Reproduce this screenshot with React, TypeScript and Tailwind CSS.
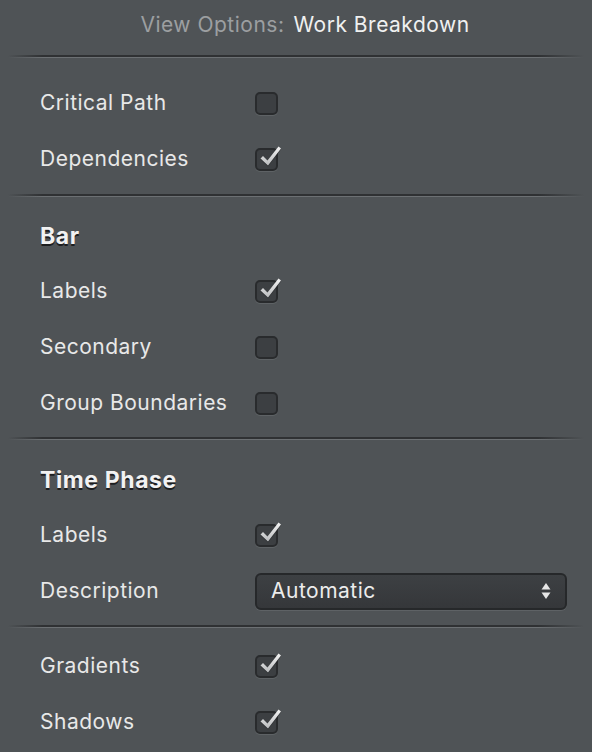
import React from "react";

const font = { fontFamily: "Inter, 'Noto Sans', sans-serif" };

function Divider() {
  return (
    <div className="flex flex-col px-[8px]">
      <div className="h-[2px] bg-[linear-gradient(to_right,transparent,#2f3133_6%,#2f3133_92%,transparent)]" />
      <div className="h-[1px] bg-[linear-gradient(to_right,transparent,#6c7073_6%,#6c7073_92%,transparent)]" />
    </div>
  );
}

function Check() {
  return (
    <svg width="30" height="30" viewBox="0 0 30 30" className="absolute left-[2px] top-[-7px]">
      <defs>
        <linearGradient id="cg" x1="0" y1="0" x2="0" y2="1">
          <stop offset="0" stopColor="#f4f4f4" />
          <stop offset="1" stopColor="#b9bbbd" />
        </linearGradient>
      </defs>
      <path d="M3.5 17.5 L6 15 L10.5 19.5 L21.5 5.5 L24 7.5 L11 24.5 Z" fill="#1e1f21" opacity="0.5" transform="translate(0,1)" />
      <path d="M3.5 17.5 L6 15 L10.5 19.5 L21.5 5.5 L24 7.5 L11 24.5 Z" fill="url(#cg)" />
    </svg>
  );
}

function Checkbox({ checked }: { checked?: boolean }) {
  return (
    <div className="relative w-[23px] h-[23px]">
      <div className="w-[23px] h-[23px] rounded-[5px] border-2 border-[#292b2d] bg-[#3c3f42] shadow-[0_1px_0_#5e6265]" />
      {checked && <Check />}
    </div>
  );
}

function Row({ label, checked, children }: { label: string; checked?: boolean; children?: React.ReactNode }) {
  return (
    <div className="flex items-center h-14 pl-[40px]">
      <div className="w-[215px] text-[21px] tracking-[0.5px] text-[#e8e8e8]">{label}</div>
      {children ?? <Checkbox checked={checked} />}
    </div>
  );
}

function Heading({ text }: { text: string }) {
  return (
    <div className="flex items-center h-[53px] pl-[40px]">
      <div className="text-[23px] font-bold tracking-[0.6px] text-[#f2f2f2] [text-shadow:0_1.5px_0_#1c1d1f]">{text}</div>
    </div>
  );
}

function PopUp() {
  return (
    <div className="flex items-center justify-between w-[312px] h-[37px] rounded-[6px] border-2 border-[#26282a] bg-[linear-gradient(#3d4043,#35373a)] shadow-[0_1px_0_#5e6265] pl-[14px] pr-[14px]">
      <span className="text-[21px] tracking-[0.5px] text-[#ececec]">Automatic</span>
      <svg width="10" height="18" viewBox="0 0 10 18">
        <path d="M5 1 L9.5 7.5 L0.5 7.5 Z" fill="#e6e6e6" />
        <path d="M5 17 L9.5 10.5 L0.5 10.5 Z" fill="#e6e6e6" />
      </svg>
    </div>
  );
}

export default function App() {
  return (
    <div style={font} className="w-[592px] h-[752px] bg-[#4f5356] overflow-hidden antialiased">
      <div className="h-[55px] flex items-center justify-center gap-[9px] text-[21px] tracking-[0.5px] pb-[6px] pl-[18px]">
        <span className="text-[#9c9fa1]">View Options:</span>
        <span className="text-[#f0f0f0]">Work Breakdown</span>
      </div>
      <Divider />
      <div className="pt-[17px] pb-[7px]">
        <Row label="Critical Path" />
        <Row label="Dependencies" checked />
      </div>
      <Divider />
      <div className="pt-[13px] pb-[6px]">
        <Heading text="Bar" />
        <Row label="Labels" checked />
        <Row label="Secondary" />
        <Row label="Group Boundaries" />
      </div>
      <Divider />
      <div className="pt-[14px] pb-[6px]">
        <Heading text="Time Phase" />
        <Row label="Labels" checked />
        <Row label="Description">
          <PopUp />
        </Row>
      </div>
      <Divider />
      <div className="pt-[10px]">
        <Row label="Gradients" checked />
        <Row label="Shadows" checked />
      </div>
    </div>
  );
}
